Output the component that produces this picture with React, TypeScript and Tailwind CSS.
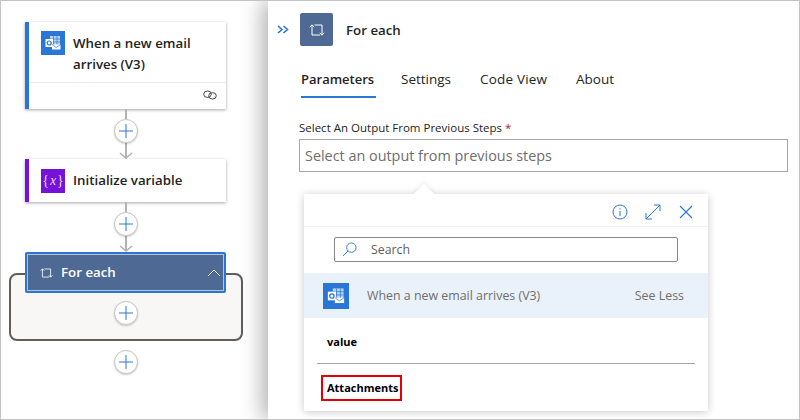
const font = "font-['Open_Sans','Noto_Sans',sans-serif]";

function LoopIcon({ className }: { className: string }) {
  return (
    <svg viewBox="0 0 16 12" fill="none" stroke="currentColor" strokeWidth="1" className={className}>
      <path d="M3 1V11H11" />
      <path d="M5.5 1H13V11" />
      <path d="M0.8 3.2L3 0.8L5.2 3.2" />
      <path d="M10.8 8.8L13 11.2L15.2 8.8" />
    </svg>
  );
}

function OutlookIcon({ className }: { className: string }) {
  return (
    <svg viewBox="0 0 24 24" className={className}>
      <rect width="24" height="24" fill="#2a76d6" />
      <path d="M9 5h10v10H9z" fill="#b9d4f3" />
      <path d="M9 8h10M9 11h10M12.5 5v10M16 5v10" stroke="#2a76d6" strokeWidth="0.7" />
      <rect x="4.5" y="8" width="7.5" height="8" fill="#fff" />
      <circle cx="8.2" cy="12" r="2" fill="none" stroke="#2a76d6" strokeWidth="1.2" />
      <path d="M11 13.5h8.5v5H11z" fill="#fff" />
      <path d="M11 13.5l4.2 3 4.3-3" fill="none" stroke="#2a76d6" strokeWidth="0.7" />
    </svg>
  );
}

function AddButton() {
  return (
    <button className="relative z-10 flex size-[24px] items-center justify-center rounded-full border border-[#c8c6c4] bg-white shadow-[0_1px_2px_rgba(0,0,0,0.2)]">
      <svg viewBox="0 0 16 16" stroke="#2a76d6" strokeWidth="1" className="size-[16px]">
        <path d="M8 1V15M1 8H15" />
      </svg>
    </button>
  );
}

function Connector({ top, bottom }: { top: string; bottom: string }) {
  return (
    <div className="flex flex-col items-center">
      <div className={`w-[2px] bg-[#b5b3b1] ${top}`} />
      <AddButton />
      <div className={`w-[2px] bg-[#b5b3b1] ${bottom}`} />
      <svg viewBox="0 0 14 7" fill="none" stroke="#b5b3b1" strokeWidth="1.6" className="-mt-[6px] h-[7px] w-[14px]">
        <path d="M1 1L7 6L13 1" />
      </svg>
    </div>
  );
}

export default function App() {
  return (
    <div className={`${font} flex h-[420px] w-[800px] overflow-hidden border border-[#c4c4c4] bg-white text-[#252423]`}>
      <div className="flex w-[267px] shrink-0 flex-col items-center pt-[21px] pr-[18px]">
        <div className="w-[201px] border-l-[4px] border-l-[#2a76d6] bg-white shadow-[0_1px_3px_rgba(0,0,0,0.35)]">
          <div className="flex h-[61px] gap-[8px] border-b border-[#edebe9] pt-[9px] pl-[12px]">
            <OutlookIcon className="size-[24px] shrink-0" />
            <div className="pt-[2px] text-[13.3px] leading-[21px] font-semibold">When a new email arrives (V3)</div>
          </div>
          <div className="flex h-[26px] items-center justify-end pr-[9px] pb-[3px]">
            <svg viewBox="0 0 14 10" fill="none" stroke="#4a4847" strokeWidth="1" className="h-[10px] w-[14px]">
              <ellipse cx="4.5" cy="4.2" rx="3.8" ry="3.2" />
              <ellipse cx="9.5" cy="5.8" rx="3.8" ry="3.2" />
            </svg>
          </div>
        </div>
        <Connector top="h-[10px]" bottom="h-[15px]" />
        <div className="flex h-[43px] w-[201px] items-center gap-[8px] border-l-[4px] border-l-[#7511d8] bg-white pl-[12px] shadow-[0_1px_3px_rgba(0,0,0,0.35)]">
          <div className="flex size-[24px] items-center justify-center bg-[#7511d8] font-['Liberation_Serif',serif] text-[14px] text-[#e8d5fb]">
            {'{'}<i className="mx-[1px]">x</i>{'}'}
          </div>
          <div className="text-[13.3px] font-semibold">Initialize variable</div>
        </div>
        <Connector top="h-[10px]" bottom="h-[15px]" />
        <div className="relative z-10 flex h-[41px] w-[201px] items-center gap-[8px] rounded-[2px] border-[2px] border-[#2a76d6] bg-[#4e6a94] pr-[3px] pl-[13px] text-white outline outline-[1px] -outline-offset-[3px] outline-[#b8c4d6]">
          <LoopIcon className="h-[10px] w-[13px]" />
          <div className="flex-1 text-[13.3px] font-semibold">For each</div>
          <svg viewBox="0 0 14 8" fill="none" stroke="#fff" strokeWidth="1" className="h-[8px] w-[14px]">
            <path d="M1 7L7 1L13 7" />
          </svg>
        </div>
        <div className="-mt-[20px] flex h-[68px] w-[234px] items-end justify-center rounded-[8px] border-[2px] border-[#605e5c] bg-[#f8f7f6] pb-[14px]">
          <AddButton />
        </div>
        <div className="mt-[9px]">
          <AddButton />
        </div>
      </div>

      <div className="flex w-[531px] shrink-0 flex-col bg-white pl-[9px] shadow-[-6px_0_20px_rgba(0,0,0,0.3)]">
        <div className="flex items-center pt-[12px]">
          <svg viewBox="0 0 12 9" fill="none" stroke="#2a76d6" strokeWidth="1.6" className="h-[9px] w-[12px]">
            <path d="M1 1L5 4.5L1 8M6.5 1L10.5 4.5L6.5 8" />
          </svg>
          <div className="ml-[11px] flex size-[33px] items-center justify-center rounded-[2px] bg-[#4e6a94] text-white">
            <LoopIcon className="h-[12px] w-[16px]" />
          </div>
          <div className="ml-[13px] pt-[2px] text-[13.3px] font-semibold">For each</div>
        </div>

        <div className="mt-[23px] ml-[24px] flex gap-[25px] text-[13.5px] leading-[20px]">
          <div className="w-[75px] border-b-[2px] border-[#2a76d6] pb-[7px] text-[13px] font-semibold">Parameters</div>
          <div className="w-[54px]">Settings</div>
          <div className="w-[71px] tracking-[0.2px]">Code View</div>
          <div>About</div>
        </div>

        <div className="mt-[22px] ml-[22px] text-[11.5px] leading-[16px]">
          Select An Output From Previous Steps <span className="text-[#a4262c]">*</span>
        </div>
        <div className="mt-[3px] ml-[22px] flex h-[33px] w-[489px] items-center border border-[#a8a6a4] px-[5px] text-[14.4px] text-[#706e6c]">
          Select an output from previous steps
        </div>

        <div className="relative mt-[22px] ml-[27px] flex h-[217px] w-[404px] flex-col bg-white shadow-[0_1px_8px_rgba(0,0,0,0.22)]">
          <div className="absolute -top-[7px] left-[112px] size-[16px] rotate-45 bg-white shadow-[-2px_-2px_4px_rgba(0,0,0,0.06)]" />
          <div className="relative flex h-[33px] items-center justify-end border-b border-[#f3f2f1] pt-[4px] pr-[15px] text-[#2a76d6]">
            <svg viewBox="0 0 16 16" fill="none" stroke="currentColor" strokeWidth="1" className="size-[16px]">
              <circle cx="8" cy="8" r="7" />
              <path d="M8 7V12M8 4.2V5.4" />
            </svg>
            <svg viewBox="0 0 16 16" fill="none" stroke="currentColor" strokeWidth="1" className="ml-[17px] size-[16px]">
              <path d="M1 15L15 1M9 1H15V7M1 9V15H7" />
            </svg>
            <svg viewBox="0 0 14 14" fill="none" stroke="currentColor" strokeWidth="1.1" className="ml-[18px] size-[14px]">
              <path d="M1 1L13 13M13 1L1 13" />
            </svg>
          </div>
          <div className="mt-[10px] ml-[30px] flex h-[25px] w-[344px] items-center gap-[14px] rounded-[2px] border border-[#8a8886] pl-[7px] text-[12.3px] text-[#605e5c]">
            <svg viewBox="0 0 16 16" fill="none" stroke="#2a76d6" strokeWidth="1" className="size-[15px]">
              <circle cx="10" cy="6" r="5" />
              <path d="M6.5 9.5L1 15" />
            </svg>
            <span className="pt-[2px]">Search</span>
          </div>
          <div className="mt-[11px] flex h-[45px] items-center bg-[#e9f1fa] pr-[24px] pl-[19px] text-[12.4px] text-[#706e6c]">
            <OutlookIcon className="size-[26px]" />
            <div className="ml-[18px] flex-1 pt-[1px]">When a new email arrives (V3)</div>
            <div className="pt-[1px]">See Less</div>
          </div>
          <div className="mt-[16px] ml-[23px] text-[11px] leading-[16px] font-bold text-black">value</div>
          <div className="mx-[13px] mt-[13px] border-t border-[#a8a6a4]" />
          <div className="mt-[11px] ml-[17px] flex h-[26px] w-[81px] items-center border-[2px] border-[#e80000] pl-[4px] text-[11px] font-bold text-black">
            Attachments
          </div>
        </div>
      </div>
    </div>
  );
}
